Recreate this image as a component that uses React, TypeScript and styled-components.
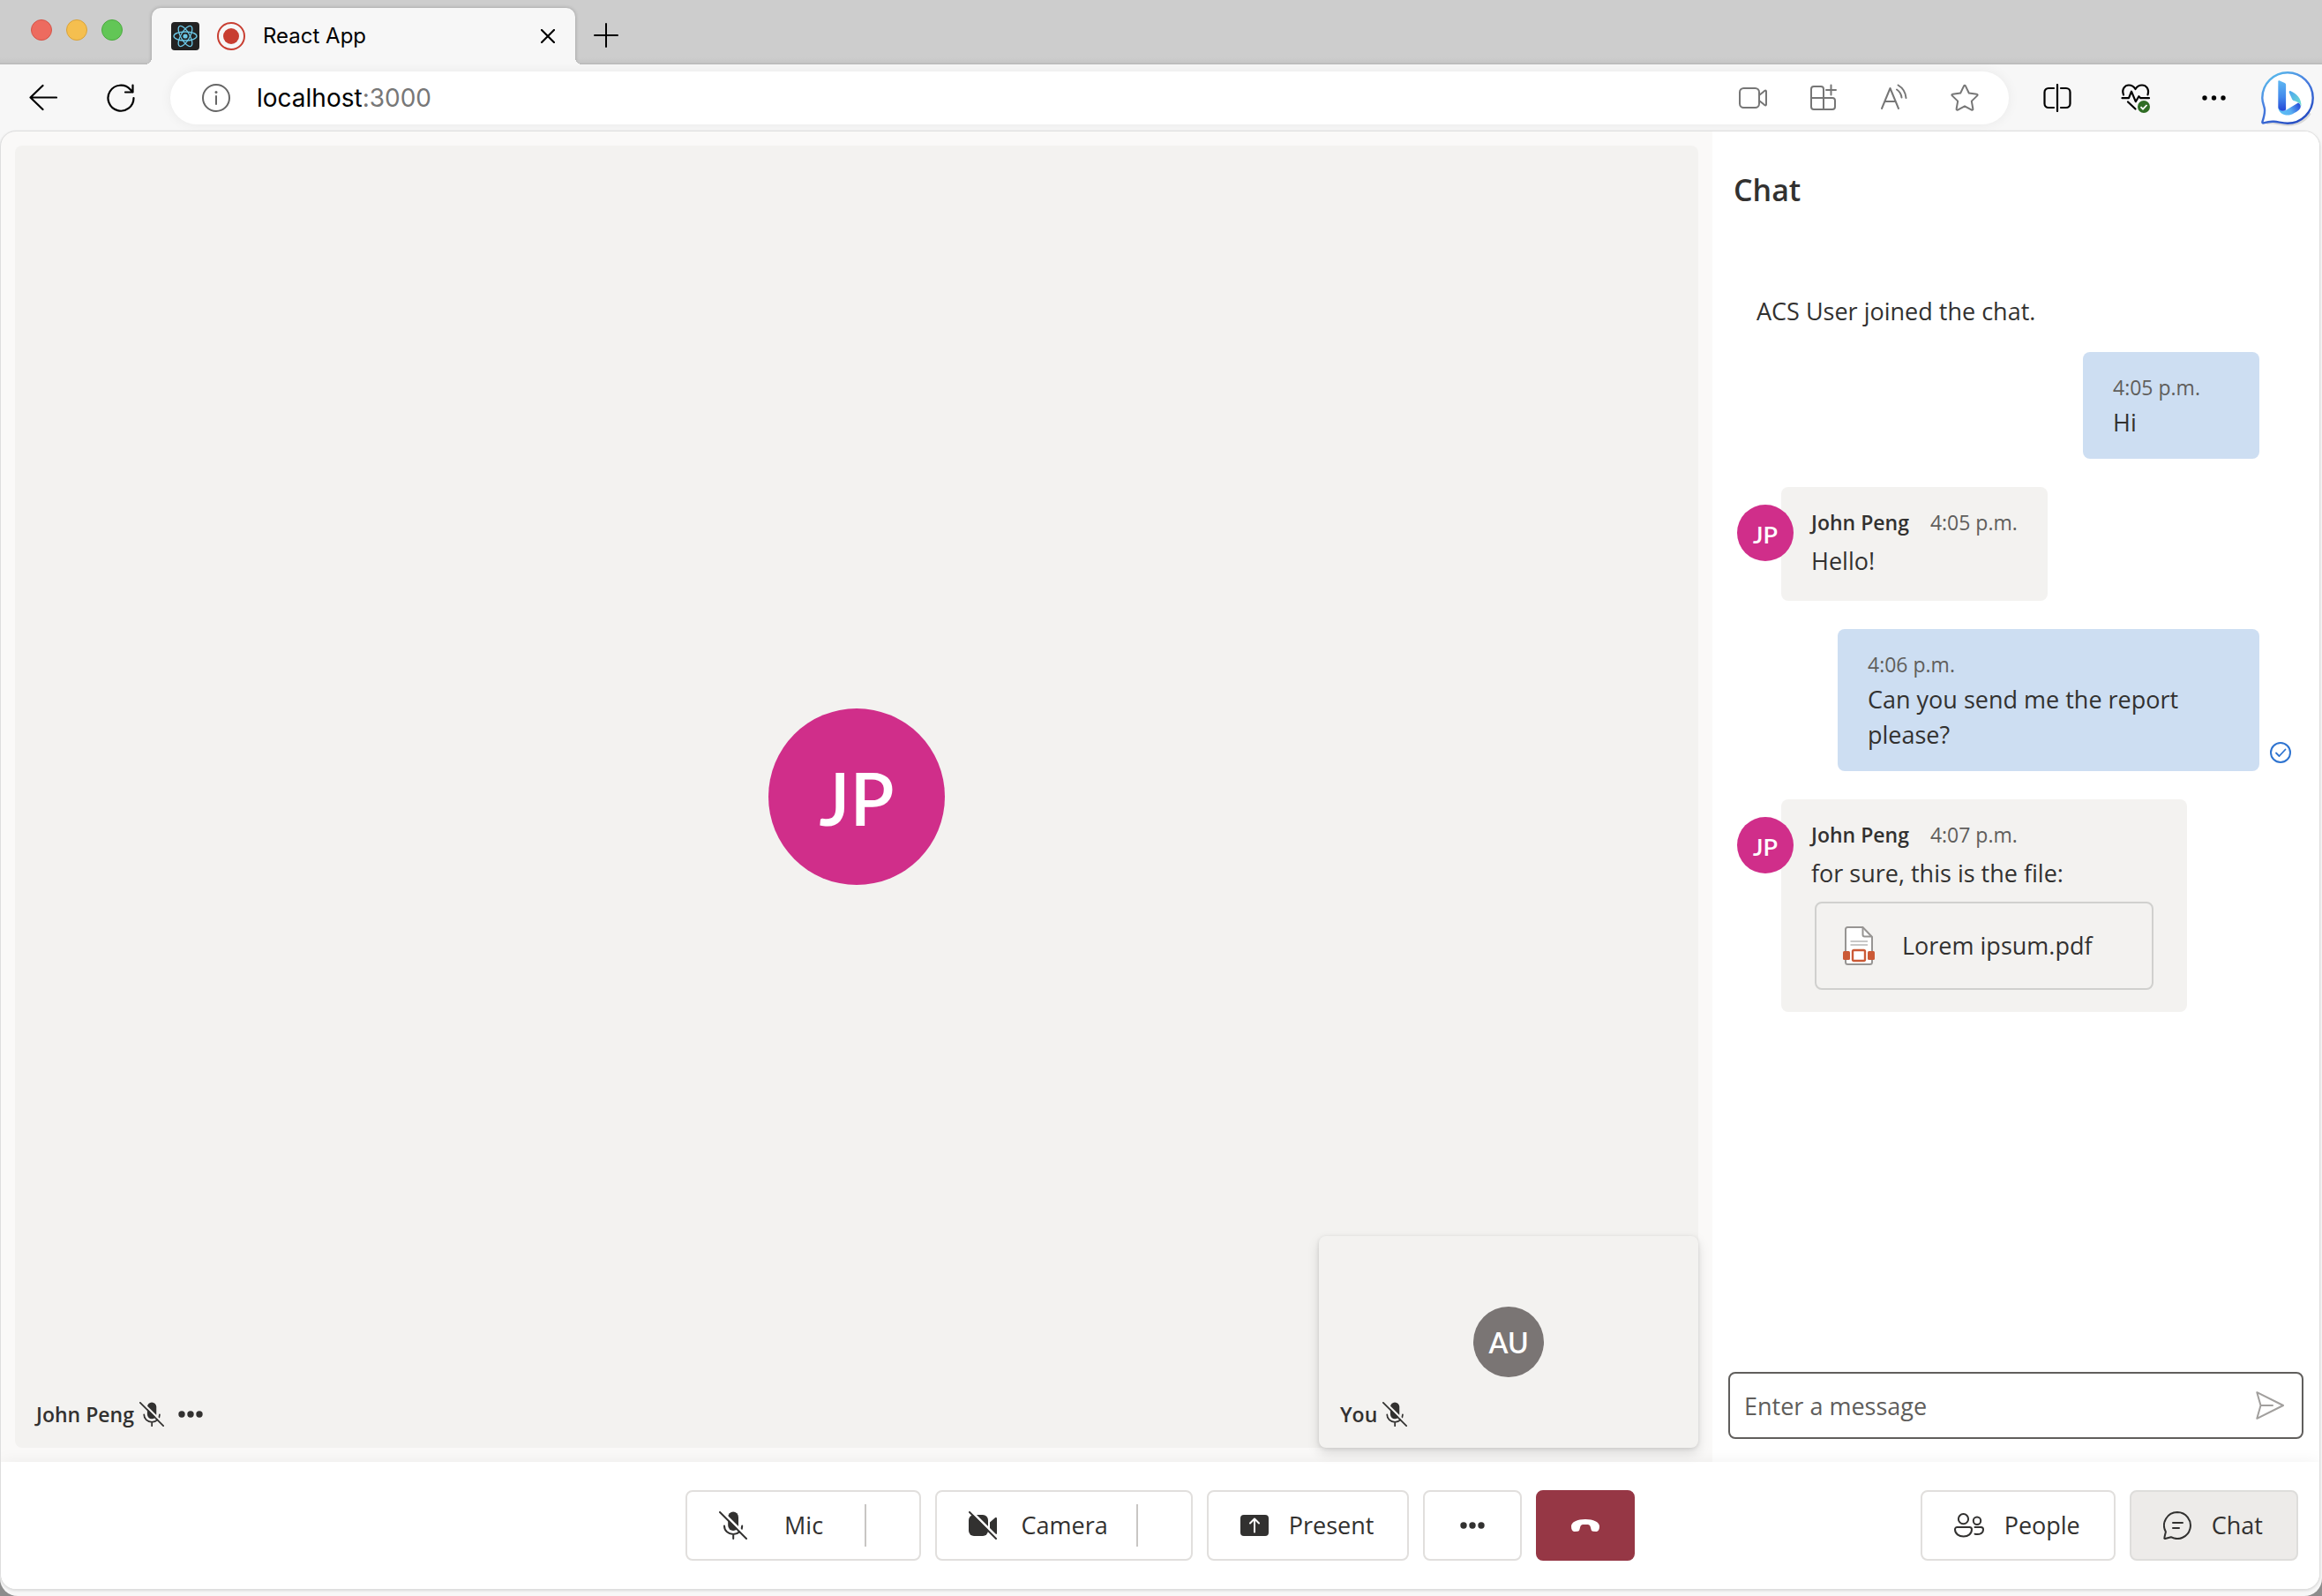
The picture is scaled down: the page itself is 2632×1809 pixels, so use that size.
import React from "react";
import styled, { createGlobalStyle } from "styled-components";

const ui = `"Open Sans", "Noto Sans", sans-serif`;
const system = `Inter, "Liberation Sans", sans-serif`;
const initials = `Lato, "Open Sans", sans-serif`;
const ink = "#323130";

const GlobalStyle = createGlobalStyle`
  *, *::before, *::after { box-sizing: border-box; }
  html { background: #8c8c8c; }
  body { margin: 0; font-family: ${ui}; color: ${ink}; }
  button, input { font: inherit; color: inherit; }
  h1, p { margin: 0; }
  svg { display: block; flex: none; }
`;

/* ---------- browser window ---------- */

const Window = styled.div`
  display: flex;
  flex-direction: column;
  height: 100vh;
  min-height: 900px;
  background: #f7f7f7;
  border-radius: 0 0 20px 20px;
  overflow: hidden;
`;

const TabStrip = styled.header`
  display: flex;
  height: 73px;
  padding: 9px 0 0 35px;
  background: linear-gradient(#cdcdcd 65px, #c6c6c6 71px, #b4b4b4);
  font-family: ${system};
`;

const TrafficLights = styled.div`
  display: flex;
  gap: 16px;
  margin: 13px 33px 0 0;
`;

const Light = styled.button<{ $fill: string; $edge: string }>`
  width: 24px;
  height: 24px;
  padding: 0;
  border: 1px solid ${(p) => p.$edge};
  border-radius: 50%;
  background: ${(p) => p.$fill};
`;

const Tab = styled.div`
  position: relative;
  display: flex;
  align-items: center;
  width: 480px;
  padding: 0 23px 0 22px;
  border-radius: 10px 10px 0 0;
  background: #f7f7f7;
  box-shadow: 0 0 4px rgba(0, 0, 0, 0.24);
  clip-path: inset(-6px -10px 0 -10px);
  color: #000;
  font-size: 24px;
  line-height: 32px;

  &::before,
  &::after {
    content: "";
    position: absolute;
    bottom: 0;
    width: 8px;
    height: 8px;
  }
  &::before {
    left: -8px;
    background: radial-gradient(circle at 0 0, transparent 8px, #f7f7f7 8px);
  }
  &::after {
    right: -8px;
    background: radial-gradient(circle at 100% 0, transparent 8px, #f7f7f7 8px);
  }
`;

const TabIcons = styled.span`
  display: flex;
  gap: 20px;
  margin-right: 20px;
`;

const TabTitle = styled.span`
  flex: 1;
`;

const IconButton = styled.button<{ $tone?: string }>`
  display: flex;
  align-items: center;
  justify-content: center;
  padding: 0;
  border: 0;
  background: none;
  color: ${(p) => p.$tone ?? "#000"};
`;

const NewTab = styled(IconButton)`
  margin-left: 21px;
  padding-bottom: 2px;
`;

const Toolbar = styled.nav`
  display: flex;
  align-items: center;
  height: 75px;
  padding: 0 9px 0 33px;
`;

const NavButtons = styled.div`
  display: flex;
  gap: 56px;
`;

const AddressBar = styled.div`
  display: flex;
  align-items: center;
  flex: 1;
  height: 60px;
  margin: 0 39px 0 40px;
  padding: 0 34px 0 36px;
  border-radius: 30px;
  background: #fff;
  box-shadow: 0 0 14px rgba(0, 0, 0, 0.06);
`;

const Address = styled.button`
  flex: 1;
  margin-left: 30px;
  padding: 0;
  border: 0;
  background: none;
  color: #000;
  font-family: ${system};
  font-size: 28px;
  line-height: 40px;
  text-align: left;
  cursor: text;
`;

const Port = styled.span`
  color: #777;
`;

const PageActions = styled.div`
  display: flex;
  gap: 48px;
`;

const BrowserActions = styled.div`
  display: flex;
  align-items: center;
  gap: 56px;
  margin-right: 37px;
`;

/* ---------- call page ---------- */

const Page = styled.div`
  display: flex;
  flex-direction: column;
  flex: 1;
  min-height: 0;
  margin: 0 2px 7px 0;
  border: 1px solid #dedede;
  border-radius: 18px;
  background: #faf9f8;
  box-shadow: 0 1px 3px rgba(0, 0, 0, 0.12);
  overflow: hidden;
`;

const CallArea = styled.main`
  display: flex;
  flex: 1;
  min-height: 0;
`;

const Stage = styled.section`
  display: flex;
  flex: 1;
  padding: 16px;
`;

const VideoTile = styled.div`
  position: relative;
  display: grid;
  flex: 1;
  border-radius: 8px;
  background: #f3f2f0;
`;

const LocalTile = styled.div`
  position: absolute;
  right: 0;
  bottom: 0;
  display: grid;
  width: 430px;
  height: 240px;
  border-radius: 8px;
  background: #f3f2f0;
  box-shadow: 0 6px 14px rgba(0, 0, 0, 0.13), 0 1px 4px rgba(0, 0, 0, 0.11);
`;

const Avatar = styled.span<{ $size: number; $font: number; $fill: string }>`
  display: flex;
  grid-area: 1 / 1;
  place-self: center;
  align-items: center;
  justify-content: center;
  flex: none;
  width: ${(p) => p.$size}px;
  height: ${(p) => p.$size}px;
  padding-top: 2px;
  border-radius: 50%;
  background: ${(p) => p.$fill};
  color: #fff;
  font-family: ${initials};
  font-size: ${(p) => p.$font}px;
  font-weight: 600;
  line-height: 1;
`;

const NameTag = styled.div`
  display: flex;
  grid-area: 1 / 1;
  place-self: end start;
  align-items: center;
  gap: 6px;
  padding: 0 0 20px 24px;
  font-size: 23px;
  font-weight: 600;
  line-height: 36px;
`;

const TileMenu = styled(IconButton)`
  margin-left: 10px;
`;

/* ---------- chat ---------- */

const ChatPanel = styled.aside`
  display: flex;
  flex-direction: column;
  width: 688px;
  background: #fff;
`;

const ChatTitle = styled.h1`
  padding: 42px 24px 0;
  font-size: 34px;
  font-weight: 600;
  line-height: 48px;
`;

const SystemNote = styled.p`
  margin: 94px 0 26px 50px;
  font-size: 27px;
  line-height: 40px;
`;

const Messages = styled.div`
  display: flex;
  flex-direction: column;
  flex: 1;
  gap: 32px;
  padding-left: 28px;
`;

const Row = styled.article<{ $own?: boolean }>`
  display: flex;
  align-items: flex-start;
  justify-content: ${(p) => (p.$own ? "flex-end" : "flex-start")};
`;

const RowAvatar = styled.div`
  z-index: 1;
  margin: 20px -14px 0 0;
`;

const Bubble = styled.div<{ $own?: boolean }>`
  min-width: 200px;
  max-width: 478px;
  padding: ${(p) => (p.$own ? "22px 34px 21px" : "22px 34px 25px")};
  border-radius: 8px;
  background: ${(p) => (p.$own ? "#cddef2" : "#f3f2f0")};
`;

const Meta = styled.div`
  display: flex;
  gap: 24px;
  font-size: 23px;
  line-height: 36px;
`;

const Author = styled.strong`
  font-weight: 600;
`;

const Time = styled.time`
  color: #605e5c;
`;

const Body = styled.p<{ $own?: boolean }>`
  padding-top: ${(p) => (p.$own ? 2 : 6)}px;
  font-size: 27px;
  line-height: 40px;
`;

const Receipt = styled.span`
  display: flex;
  align-self: flex-end;
  width: 68px;
  padding: 0 0 9px 12px;
`;

const FileCard = styled.a`
  display: flex;
  align-items: center;
  gap: 31px;
  width: 384px;
  height: 100px;
  margin: 12px 4px 0;
  padding: 0 30px;
  border: 2px solid #d0d0ce;
  border-radius: 8px;
  color: inherit;
  font-size: 27px;
  line-height: 40px;
  text-decoration: none;
`;

const Composer = styled.form`
  display: flex;
  height: 76px;
  margin: 0 18px 26px;
  padding: 0 20px 0 16px;
  border: 2px solid #605e5c;
  border-radius: 8px;
`;

const MessageInput = styled.input`
  flex: 1;
  min-width: 0;
  padding: 0;
  border: 0;
  outline: 0;
  background: none;
  font-size: 27px;
  &::placeholder {
    color: #605e5c;
    opacity: 1;
  }
`;

/* ---------- control bar ---------- */

const ControlBar = styled.footer`
  display: grid;
  grid-template-columns: 1fr auto 1fr;
  padding: 32px 24px;
  background: #fff;
  box-shadow: 0 0 18px rgba(0, 0, 0, 0.06);
`;

const Group = styled.div<{ $column: number }>`
  display: flex;
  grid-column: ${(p) => p.$column};
  justify-self: end;
  gap: 16px;
`;

const Control = styled.button<{ $active?: boolean }>`
  display: flex;
  align-items: center;
  gap: 23px;
  height: 80px;
  padding: 0 38px 0 36px;
  border: 2px solid ${(p) => (p.$active ? "#dedddb" : "#e1dfdd")};
  border-radius: 8px;
  background: ${(p) => (p.$active ? "#edebe9" : "#fff")};
  font-size: 27px;
  line-height: 40px;
`;

const SplitControl = styled.div`
  display: flex;
  align-items: center;
  height: 80px;
  border: 2px solid #e1dfdd;
  border-radius: 8px;
`;

const SplitMain = styled.button`
  display: flex;
  align-items: center;
  gap: 28px;
  height: 76px;
  padding: 0 32px 0 36px;
  border: 0;
  background: none;
  font-size: 27px;
  line-height: 40px;
`;

const SplitLabel = styled.span`
  min-width: 73px;
  text-align: center;
`;

const SplitMenu = styled.button`
  width: 62px;
  height: 48px;
  border: 0;
  border-left: 2px solid #c8c6c4;
  background: none;
`;

const SquareControl = styled(Control)<{ $danger?: boolean }>`
  justify-content: center;
  width: 112px;
  padding: 0;
  color: ${(p) => (p.$danger ? "#fff" : ink)};
  ${(p) => p.$danger && "border-color: #963745; background: #963745;"}
`;

/* ---------- icons ---------- */

type IconProps = { size?: number; id?: string };

const line = {
  fill: "none",
  stroke: "currentColor",
  strokeWidth: 2,
  strokeLinecap: "round" as const,
  strokeLinejoin: "round" as const,
};

const ReactMark = () => (
  <svg width="32" height="32" viewBox="0 0 32 32" aria-hidden="true">
    <rect width="32" height="32" rx="4" fill="#222" />
    <g fill="none" stroke="#6cc9e8" strokeWidth="1.3">
      <ellipse cx="16" cy="16" rx="13" ry="5" />
      <ellipse cx="16" cy="16" rx="13" ry="5" transform="rotate(60 16 16)" />
      <ellipse cx="16" cy="16" rx="13" ry="5" transform="rotate(120 16 16)" />
    </g>
    <circle cx="16" cy="16" r="2.6" fill="#6cc9e8" />
  </svg>
);

const Recording = () => (
  <svg width="32" height="32" viewBox="0 0 32 32" aria-hidden="true">
    <circle cx="16" cy="16" r="15" fill="none" stroke="#c83e31" strokeWidth="2" />
    <circle cx="16" cy="16" r="9" fill="#c83e31" />
  </svg>
);

const Cross = () => (
  <svg width="16" height="16" viewBox="0 0 16 16" aria-hidden="true">
    <path d="M1 1l14 14M15 1L1 15" {...line} strokeWidth={2.2} />
  </svg>
);

const Plus = () => (
  <svg width="28" height="28" viewBox="0 0 28 28" aria-hidden="true">
    <path d="M14 1v26M1 14h26" {...line} />
  </svg>
);

const BackArrow = () => (
  <svg width="32" height="32" viewBox="0 0 32 32" aria-hidden="true">
    <path d="M15.5 2L1.5 15.5l14 13.5M1.5 15.5H31" {...line} strokeWidth={2.2} />
  </svg>
);

const Reload = () => (
  <svg width="32" height="32" viewBox="0 0 32 32" aria-hidden="true">
    <path d="M30.5 16A14.5 14.5 0 1 1 26.8 6.500L29.500 9.500M29.500 1.500v8h-8.500" {...line} strokeWidth={2.2} />
  </svg>
);

const Info = () => (
  <svg width="32" height="32" viewBox="0 0 32 32" color="#666" aria-hidden="true">
    <circle cx="16" cy="16" r="15" {...line} />
    <path d="M16 14v9" {...line} />
    <circle cx="16" cy="9.5" r="1.5" fill="currentColor" />
  </svg>
);

const VideoOutline = () => (
  <svg width="32" height="32" viewBox="0 0 32 32" aria-hidden="true">
    <rect x="1" y="5" width="22" height="22" rx="4.5" {...line} />
    <path d="M23 13l6.500-5.300c.7-.5 1.500-.1 1.500.8v15c0 .9-.8 1.300-1.500.8L23 19" {...line} />
  </svg>
);

const Apps = () => (
  <svg width="32" height="32" viewBox="0 0 32 32" aria-hidden="true">
    <path
      d="M16 16V6a3 3 0 0 0-3-3H5a3 3 0 0 0-3 3v20a3 3 0 0 0 3 3h21a3 3 0 0 0 3-3v-7a3 3 0 0 0-3-3H2M16 16v13M24.500 1.500v11M19 7h11"
      {...line}
    />
  </svg>
);

const ReadAloud = () => (
  <svg width="32" height="32" viewBox="0 0 32 32" aria-hidden="true">
    <path d="M2 28L11.500 5 21 28M5.300 20h12.400M19 6.500c3 2 5 5 5.500 9M20.500 1.500c5 3 8.500 8.500 9 14.500" {...line} />
  </svg>
);

const Star = () => (
  <svg width="32" height="32" viewBox="0 0 32 32" aria-hidden="true">
    <path
      d="M15.100 2.400c.4-.8 1.400-.8 1.800 0l3.900 8.100 8.900 1.200c.9.100 1.200 1.100.6 1.700L23.800 19.600l1.600 8.900c.2.900-.7 1.500-1.500 1.100L16 25.300l-7.900 4.300c-.8.400-1.700-.2-1.500-1.100l1.600-8.900-6.500-6.200c-.6-.6-.3-1.600.6-1.700l8.900-1.200z"
      {...line}
    />
  </svg>
);

const SplitScreen = () => (
  <svg width="32" height="32" viewBox="0 0 32 32" aria-hidden="true">
    <path
      d="M16 1v30M12 5H6a4.500 4.500 0 0 0-4.500 4.500v13A4.500 4.500 0 0 0 6 27h6M20 5h6a4.500 4.500 0 0 1 4.500 4.500v13A4.500 4.500 0 0 1 26 27h-6"
      {...line}
      strokeWidth={2.2}
    />
  </svg>
);

const Health = () => (
  <svg width="34" height="34" viewBox="0 0 34 34" aria-hidden="true">
    <path
      d="M3 13.500C.5 6.500 5 2.500 9 2.500c4 0 6 2 7.500 4.500C18 4.500 20.500 2.500 24 2.500c4.500 0 8.500 4 6.500 11M1.500 17.200H9l3-7.500 4.800 11.500 3.600-6 2 2H32M8 21.500l8.500 8"
      {...line}
      strokeWidth={2.2}
    />
    <circle cx="26" cy="27" r="7" fill="#2f6d24" />
    <path d="M22.500 27.200l2.500 2.500 4.500-4.700" fill="none" stroke="#fff" strokeWidth="1.8" />
  </svg>
);

const Dots = () => (
  <svg width="28" height="8" viewBox="0 0 28 8" fill="currentColor" aria-hidden="true">
    <circle cx="4" cy="4" r="3.7" />
    <circle cx="14" cy="4" r="3.7" />
    <circle cx="24" cy="4" r="3.7" />
  </svg>
);

const MenuDots = () => (
  <svg width="32" height="32" viewBox="0 0 32 32" fill="currentColor" aria-hidden="true">
    <circle cx="5" cy="16" r="2.7" />
    <circle cx="15.5" cy="16" r="2.7" />
    <circle cx="26" cy="16" r="2.7" />
  </svg>
);

const Bing = () => (
  <svg width="60" height="64" viewBox="0 -2 60 64" aria-hidden="true">
    <defs>
      <linearGradient id="bingRing" x1="0" y1="0" x2="0.6" y2="1">
        <stop offset="0" stopColor="#5cc8ee" />
        <stop offset="0.5" stopColor="#4a7fe0" />
        <stop offset="1" stopColor="#274fc4" />
      </linearGradient>
      <linearGradient id="bingStem" x1="0" y1="0" x2="0" y2="1">
        <stop offset="0" stopColor="#5fb8f2" />
        <stop offset="0.55" stopColor="#4389ec" />
        <stop offset="1" stopColor="#2445d6" />
      </linearGradient>
      <linearGradient id="bingLeaf" x1="0" y1="0" x2="1" y2="1">
        <stop offset="0" stopColor="#4ba3f0" />
        <stop offset="1" stopColor="#6fe3cf" />
      </linearGradient>
      <linearGradient id="bingBowl" x1="0" y1="0.5" x2="1" y2="0.2">
        <stop offset="0" stopColor="#5cc0f5" />
        <stop offset="0.45" stopColor="#5aaff2" />
        <stop offset="1" stopColor="#2649d8" />
      </linearGradient>
    </defs>
    <path d="M6 58c8-2 15 2 24 2 12 0 20-5 25-13" fill="none" stroke="#000" strokeOpacity="0.12" strokeWidth="4" />
    <path
      d="M30 1.300a28.700 28.700 0 1 1 0 57.400c-6 0-10.500-1.600-15.500-1.900-4.300-.3-8.500.6-11.800 1.600-1 .3-1.500-.3-1.300-1.200C3.300 51 4.400 47 4 43 3.600 39 1.300 35 1.300 30A28.700 28.700 0 0 1 30 1.300z"
      fill="#fff"
      stroke="url(#bingRing)"
      strokeWidth="2.4"
    />
    <path d="M33 22c7 3 13 8 12.500 18-1-4-4-5.500-7-6.500-2-.6-3-1-3.600-2.600L31.800 24c-.4-1 .2-2.500 1.200-2z" fill="url(#bingLeaf)" />
    <path d="M19.300 40c1.500 4 5.500 5.500 9.500 3.500L42 35.500c3 1.500 4 5 1 8-2 2-4.500 3-6.500 4.300-6 4-17.200 1.200-17.200-7.800z" fill="url(#bingBowl)" />
    <path d="M21 10.400l5.200 2.300c1.300.6 1.900 1.400 1.900 2.800v27.500c-1 3-8.800 2-8.800-3V11.500c0-1 .7-1.500 1.700-1.100z" fill="url(#bingStem)" />
  </svg>
);

const MicOff = ({ size = 32, id }: IconProps) => (
  <svg width={size} height={size} viewBox="0 0 32 32" aria-hidden="true">
    <mask id={id}>
      <rect width="32" height="32" fill="#fff" />
      <path d="M2 -1L34 31" stroke="#000" strokeWidth="2.8" />
    </mask>
    <g mask={`url(#${id})`}>
      <rect x="10.2" y="0.5" width="11.8" height="21.5" rx="5.9" fill="currentColor" />
      <path d="M6 16.500c0 5.500 4.500 9.500 10.200 9.500s10-4 10-9.500M16.200 26v5" {...line} />
    </g>
    <path d="M1 1l30 30" {...line} />
  </svg>
);

const VideoOff = () => (
  <svg width="32" height="32" viewBox="0 0 32 32" aria-hidden="true">
    <mask id="videoOffCut">
      <rect width="32" height="32" fill="#fff" />
      <path d="M2 -1L34 31" stroke="#000" strokeWidth="2.8" />
    </mask>
    <g mask="url(#videoOffCut)" fill="currentColor">
      <rect y="4" width="22" height="24" rx="6" />
      <path d="M24 12.500l6-5.200c.9-.7 2-.2 2 .9v16.600c0 1.100-1.100 1.600-2 .9l-6-5.200z" />
    </g>
    <path d="M1 1l30 30" {...line} />
  </svg>
);

const Present = () => (
  <svg width="32" height="32" viewBox="0 0 32 32" aria-hidden="true">
    <rect y="4" width="32" height="24" rx="4" fill={ink} />
    <path d="M16 23.500V9M11 13.500L16 8.500l5 5" {...line} stroke="#fff" />
  </svg>
);

const HangUp = () => (
  <svg width="32" height="14" viewBox="0 0 32 14" fill="currentColor" aria-hidden="true">
    <path d="M0 8C0 3 7 0 16 0s16 3 16 8c0 3.500-1.200 5.800-3.500 5.900l-3.500-.2c-1.700-.1-2.300-1.200-2.700-3C21.700 7.800 21 6.400 19 6.100c-2-.3-4-.3-6 0-2 .3-2.700 1.700-3.300 4.600-.4 1.800-1 2.900-2.700 3l-3.500.2C1.200 13.800 0 11.500 0 8z" />
  </svg>
);

const People = () => (
  <svg width="34" height="32" viewBox="0 0 34 32" aria-hidden="true">
    <circle cx="10.5" cy="8.7" r="5.6" {...line} />
    <circle cx="26" cy="10.7" r="4.2" {...line} />
    <path
      d="M4 18h13.500a2.500 2.500 0 0 1 2.500 2.500c0 5-4 8-9.300 8S1 25.500 1 20.500A2.500 2.500 0 0 1 4 18zM23.500 18h7a2.500 2.500 0 0 1 2.500 2.500c0 4-3.500 6.300-9.500 5.200"
      {...line}
    />
  </svg>
);

const ChatBubble = () => (
  <svg width="32" height="32" viewBox="0 0 32 32" aria-hidden="true">
    <path d="M16 1a15 15 0 1 1-7.200 28.200L2.300 31c-.7.200-1.200-.4-1-1l1.600-6.700A15 15 0 0 1 16 1zM11 13h11M11 19h7" {...line} />
  </svg>
);

const Send = () => (
  <svg width="32" height="32" viewBox="0 0 32 32" aria-hidden="true">
    <path d="M1.300 1.200L31 16 1.300 30.800 5.500 16zM5.500 16H19" {...line} />
  </svg>
);

const Seen = () => (
  <svg width="24" height="24" viewBox="0 0 24 24" color="#2f74d0" role="img" aria-label="Seen">
    <circle cx="12" cy="12" r="11" {...line} />
    <path d="M7 12.500l3.500 3.500 7-7.500" {...line} strokeWidth={1.8} />
  </svg>
);

const PdfFile = () => (
  <svg width="36" height="44" viewBox="0 0 36 44" aria-hidden="true">
    <path d="M5 1h17.500L33 12v28.500a2.500 2.500 0 0 1-2.500 2.500h-25A2.500 2.500 0 0 1 3 40.500V3.500A2.500 2.500 0 0 1 5 1z" fill="#fff" stroke="#979593" strokeWidth="2" />
    <path d="M22.500 1v8.500a2 2 0 0 0 2 2H33" fill="none" stroke="#979593" strokeWidth="2" />
    <path d="M8.500 17H28M8.500 21H28" stroke="#c8c8c8" strokeWidth="2" />
    <rect y="28" width="8" height="10" rx="1.5" fill="#cb5a36" />
    <rect x="28" y="28" width="8" height="10" rx="1.5" fill="#cb5a36" />
    <rect x="11" y="27" width="14" height="12" rx="1.5" fill="#fff" stroke="#cb5a36" strokeWidth="2.4" />
  </svg>
);

/* ---------- composition ---------- */

type Message = { own?: boolean; time: string; text: string; file?: string; seen?: boolean };

const messages: Message[] = [
  { own: true, time: "4:05 p.m.", text: "Hi" },
  { time: "4:05 p.m.", text: "Hello!" },
  { own: true, time: "4:06 p.m.", text: "Can you send me the report please?", seen: true },
  { time: "4:07 p.m.", text: "for sure, this is the file:", file: "Lorem ipsum.pdf" },
];

const pink = "#d02e8a";

function ChatMessage({ own, time, text, file, seen }: Message) {
  return (
    <Row $own={own}>
      {!own && (
        <RowAvatar>
          <Avatar $size={64} $font={27} $fill={pink}>JP</Avatar>
        </RowAvatar>
      )}
      <Bubble $own={own}>
        <Meta>
          {!own && <Author>John Peng</Author>}
          <Time>{time}</Time>
        </Meta>
        <Body $own={own}>{text}</Body>
        {file && (
          <FileCard href="#file">
            <PdfFile />
            {file}
          </FileCard>
        )}
      </Bubble>
      {own && <Receipt>{seen && <Seen />}</Receipt>}
    </Row>
  );
}

function Browser() {
  return (
    <>
      <TabStrip>
        <TrafficLights>
          <Light aria-label="Close window" $fill="#ed6b5f" $edge="#d55549" />
          <Light aria-label="Minimize window" $fill="#f5bf4f" $edge="#d9a33a" />
          <Light aria-label="Zoom window" $fill="#62c656" $edge="#4caa40" />
        </TrafficLights>
        <Tab>
          <TabIcons>
            <ReactMark />
            <Recording />
          </TabIcons>
          <TabTitle>React App</TabTitle>
          <IconButton aria-label="Close tab"><Cross /></IconButton>
        </Tab>
        <NewTab aria-label="New tab"><Plus /></NewTab>
      </TabStrip>
      <Toolbar>
        <NavButtons>
          <IconButton aria-label="Back"><BackArrow /></IconButton>
          <IconButton aria-label="Reload"><Reload /></IconButton>
        </NavButtons>
        <AddressBar>
          <Info />
          <Address>localhost<Port>:3000</Port></Address>
          <PageActions>
            <IconButton $tone="#767676" aria-label="Camera access"><VideoOutline /></IconButton>
            <IconButton $tone="#767676" aria-label="Install app"><Apps /></IconButton>
            <IconButton $tone="#767676" aria-label="Read aloud"><ReadAloud /></IconButton>
            <IconButton $tone="#767676" aria-label="Add to favorites"><Star /></IconButton>
          </PageActions>
        </AddressBar>
        <BrowserActions>
          <IconButton aria-label="Split screen"><SplitScreen /></IconButton>
          <IconButton aria-label="Browser essentials"><Health /></IconButton>
          <IconButton aria-label="Settings and more"><MenuDots /></IconButton>
        </BrowserActions>
        <IconButton aria-label="Bing"><Bing /></IconButton>
      </Toolbar>
    </>
  );
}

export default function App() {
  return (
    <>
      <GlobalStyle />
      <Window>
        <Browser />
        <Page>
          <CallArea>
            <Stage>
              <VideoTile>
                <Avatar $size={200} $font={82} $fill={pink}>JP</Avatar>
                <NameTag>
                  John Peng
                  <MicOff size={28} id="remoteMic" />
                  <TileMenu $tone={ink} aria-label="More options for John Peng"><Dots /></TileMenu>
                </NameTag>
                <LocalTile>
                  <Avatar $size={80} $font={32} $fill="#7a7574">AU</Avatar>
                  <NameTag>
                    You
                    <MicOff size={28} id="localMic" />
                  </NameTag>
                </LocalTile>
              </VideoTile>
            </Stage>
            <ChatPanel>
              <ChatTitle>Chat</ChatTitle>
              <SystemNote>ACS User joined the chat.</SystemNote>
              <Messages>
                {messages.map((m, i) => (
                  <ChatMessage key={i} {...m} />
                ))}
              </Messages>
              <Composer onSubmit={(e) => e.preventDefault()}>
                <MessageInput aria-label="Enter a message" placeholder="Enter a message" />
                <IconButton $tone="#a19f9d" aria-label="Send message"><Send /></IconButton>
              </Composer>
            </ChatPanel>
          </CallArea>
          <ControlBar>
            <Group $column={2}>
              <SplitControl>
                <SplitMain><MicOff id="controlMic" /><SplitLabel>Mic</SplitLabel></SplitMain>
                <SplitMenu aria-label="Microphone options" />
              </SplitControl>
              <SplitControl>
                <SplitMain><VideoOff /><SplitLabel>Camera</SplitLabel></SplitMain>
                <SplitMenu aria-label="Camera options" />
              </SplitControl>
              <Control><Present />Present</Control>
              <SquareControl aria-label="More"><Dots /></SquareControl>
              <SquareControl $danger aria-label="Leave call"><HangUp /></SquareControl>
            </Group>
            <Group $column={3}>
              <Control><People />People</Control>
              <Control $active><ChatBubble />Chat</Control>
            </Group>
          </ControlBar>
        </Page>
      </Window>
    </>
  );
}
